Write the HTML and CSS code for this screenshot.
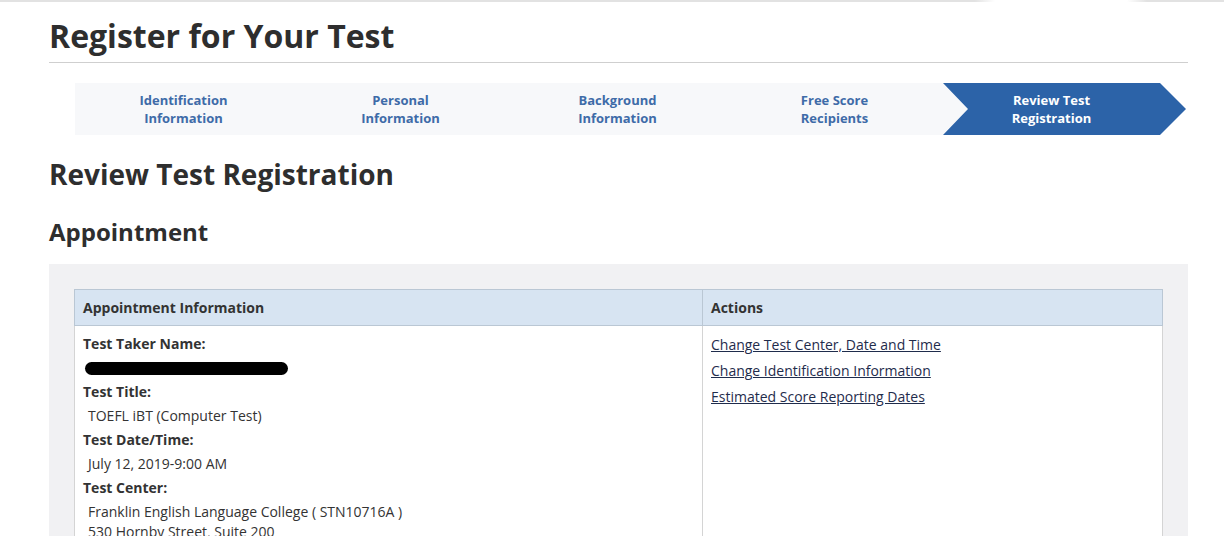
FILE: index.html
```html
<!DOCTYPE html>
<html lang="en">
<head>
    <meta charset="UTF-8">
    <meta name="viewport" content="width=device-width, initial-scale=1.0">
    <title>Register for Your Test</title>
    <link rel="stylesheet" href="styles.css">
</head>
<body>

    <div class="topline"></div>

    <div class="page">
        <h1 class="page-title">Register for Your Test</h1>

        <div class="steps">
            <div class="step">Identification<br>Information</div>
            <div class="step">Personal<br>Information</div>
            <div class="step">Background<br>Information</div>
            <div class="step">Free Score<br>Recipients</div>
            <div class="step step-active">Review Test<br>Registration</div>
        </div>

        <h2 class="section-title">Review Test Registration</h2>
        <h3 class="sub-title">Appointment</h3>

        <div class="panel">
            <table class="info-table">
                <thead>
                    <tr>
                        <th class="col-info">Appointment Information</th>
                        <th class="col-actions">Actions</th>
                    </tr>
                </thead>
                <tbody>
                    <tr>
                        <td class="col-info">
                            <div class="label">Test Taker Name:</div>
                            <div class="value"><span class="redacted"></span></div>
                            <div class="label">Test Title:</div>
                            <div class="value">TOEFL iBT (Computer Test)</div>
                            <div class="label">Test Date/Time:</div>
                            <div class="value">July 12, 2019-9:00 AM</div>
                            <div class="label">Test Center:</div>
                            <div class="value">Franklin English Language College ( STN10716A )<br>530 Hornby Street, Suite 200</div>
                        </td>
                        <td class="col-actions">
                            <a href="#">Change Test Center, Date and Time</a>
                            <a href="#">Change Identification Information</a>
                            <a href="#">Estimated Score Reporting Dates</a>
                        </td>
                    </tr>
                </tbody>
            </table>
        </div>
    </div>

</body>
</html>
```

FILE: styles.css
```css
body {
    margin: 0;
    background-color: #fff;
    color: #333;
    font-family: 'Open Sans', 'Liberation Sans', sans-serif;
    font-size: 14px;
}
.topline {
    height: 2px;
    background: linear-gradient(to right, #e2e2e2 0, #e2e2e2 975px, #fff 995px, #fff 1127px, #e2e2e2 1147px);
}
.page {
    padding: 0 36px 0 49px;
}
.page-title {
    margin: 14px 0 0;
    padding-bottom: 6px;
    font-size: 32px;
    line-height: 40px;
    font-weight: 700;
    color: #2e2e2e;
    border-bottom: 1px solid #cfcfcf;
}

/* progress bar */
.steps {
    display: flex;
    margin: 20px 0 0 26px;
    height: 52px;
    background: linear-gradient(to right, #f7f8fa 1085px, transparent 1085px);
}
.step {
    width: 217px;
    display: flex;
    align-items: center;
    justify-content: center;
    text-align: center;
    font-size: 13px;
    line-height: 18px;
    font-weight: 700;
    color: #3e6ba8;
}
.step-active {
    width: 217px;
    padding-right: 26px;
    background-color: #2c63a8;
    color: #fff;
    clip-path: polygon(0 0, 217px 0, 243px 50%, 217px 100%, 0 100%, 25px 50%);
}

.section-title {
    margin: 19px 0 0;
    font-size: 28px;
    line-height: 40px;
    font-weight: 700;
    color: #2e2e2e;
}
.sub-title {
    margin: 21px 0 0;
    font-size: 24px;
    line-height: 34px;
    font-weight: 700;
    color: #2e2e2e;
}

.panel {
    margin-top: 15px;
    padding: 25px 25px 0;
    background-color: #f1f1f3;
    height: 300px;
}
.info-table {
    width: 100%;
    border-collapse: collapse;
    background-color: #fff;
}
.info-table th {
    height: 35px;
    padding: 0 8px;
    text-align: left;
    font-weight: 700;
    background-color: #d7e4f2;
    border: 1px solid #bac7d4;
}
.info-table td {
    padding: 6px 8px 0;
    vertical-align: top;
    border: 1px solid #d4d4d4;
    height: 240px;
}
.col-info {
    width: 611px;
}
.label {
    font-weight: 700;
    line-height: 24px;
}
.value {
    margin: 2px 0;
    padding-left: 5px;
    line-height: 20px;
}
.redacted {
    display: inline-block;
    width: 203px;
    height: 13px;
    margin: 4px 0 0 -3px;
    background-color: #000;
    border-radius: 7px;
    vertical-align: top;
}
.col-actions a {
    display: block;
    line-height: 26px;
    color: #1f2c4c;
}
td.col-actions {
    padding-top: 6px;
}
```
